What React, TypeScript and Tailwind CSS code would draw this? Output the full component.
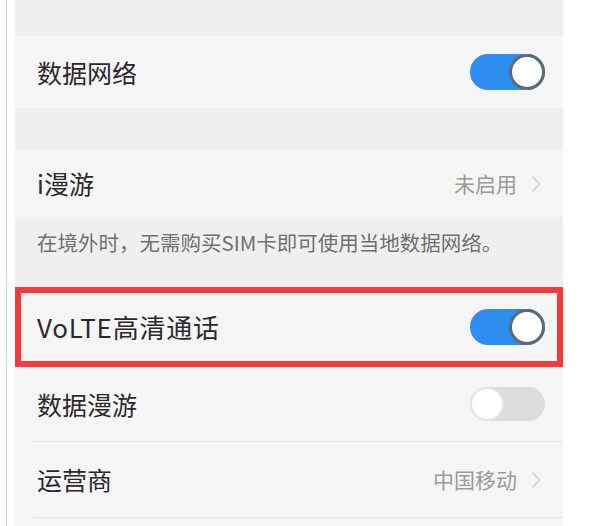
import React from "react";

const font = { fontFamily: '"Noto Sans CJK SC", "Noto Sans", sans-serif' };

function Toggle({ on }: { on: boolean }) {
  return on ? (
    <div className="relative h-[36px] w-[75px] rounded-full bg-[#2e8eef]">
      <div className="absolute right-0 top-0 h-[36px] w-[36px] rounded-full border-[3px] border-[#5b6b78] bg-white" />
    </div>
  ) : (
    <div className="relative h-[34px] w-[75px] rounded-full bg-[#dcdcdc]">
      <div className="absolute left-0 top-0 h-[34px] w-[34px] rounded-full border-[2px] border-[#e6e6e6] bg-white" />
    </div>
  );
}

function Chevron() {
  return (
    <svg width="10" height="18" viewBox="0 0 10 18" className="ml-[14px]">
      <polyline points="1.5,1.5 8.5,9 1.5,16.5" fill="none" stroke="#cdcdcd" strokeWidth="1.6" />
    </svg>
  );
}

export default function App() {
  return (
    <div className="flex h-[526px] w-[613px] bg-white" style={font}>
      <div className="ml-[6px] h-full w-px bg-[#d2d2d2]" />
      <div className="ml-[8px] flex h-full w-[548px] flex-col overflow-hidden bg-[#efefef]">
        <div className="h-[36px] shrink-0" />
        <div className="flex h-[72px] shrink-0 items-center justify-between bg-[#f5f5f5] pl-[22px] pr-[18px]">
          <span className="text-[25px] leading-none text-[#2a2a2a]">数据网络</span>
          <Toggle on />
        </div>
        <div className="h-[42px] shrink-0" />
        <div className="flex h-[67px] shrink-0 items-center justify-between bg-[#f5f5f5] pl-[22px] pr-[22px]">
          <span className="text-[25px] leading-none text-[#2a2a2a]">i漫游</span>
          <div className="flex items-center">
            <span className="text-[21px] leading-none text-[#9a9a9a]">未启用</span>
            <Chevron />
          </div>
        </div>
        <div className="h-[70px] shrink-0 pl-[22px] pt-[12px]">
          <span className="text-[20.5px] leading-[26px] text-[#707070]">在境外时，无需购买SIM卡即可使用当地数据网络。</span>
        </div>
        <div className="flex h-[80px] shrink-0 items-center justify-between border-[6px] border-[#f53a3a] bg-[#f5f5f5] pl-[16px] pr-[12px]">
          <span className="text-[26px] leading-none tracking-[0.03em] text-[#2a2a2a]">VoLTE高清通话</span>
          <Toggle on />
        </div>
        <div className="flex h-[74px] shrink-0 items-center justify-between bg-[#f5f5f5] pl-[22px] pr-[18px]">
          <span className="text-[25px] leading-none text-[#2a2a2a]">数据漫游</span>
          <Toggle on={false} />
        </div>
        <div className="flex shrink-0 bg-[#f5f5f5] pl-[18px]">
          <div className="h-px flex-1 bg-[#e3e3e3]" />
        </div>
        <div className="flex h-[75px] shrink-0 items-center justify-between bg-[#f5f5f5] pl-[22px] pr-[22px]">
          <span className="text-[25px] leading-none text-[#2a2a2a]">运营商</span>
          <div className="flex items-center">
            <span className="text-[21px] leading-none text-[#9a9a9a]">中国移动</span>
            <Chevron />
          </div>
        </div>
        <div className="flex shrink-0 bg-[#f5f5f5] pl-[18px]">
          <div className="h-px flex-1 bg-[#e3e3e3]" />
        </div>
        <div className="flex-1 bg-[#f5f5f5]" />
      </div>
    </div>
  );
}
